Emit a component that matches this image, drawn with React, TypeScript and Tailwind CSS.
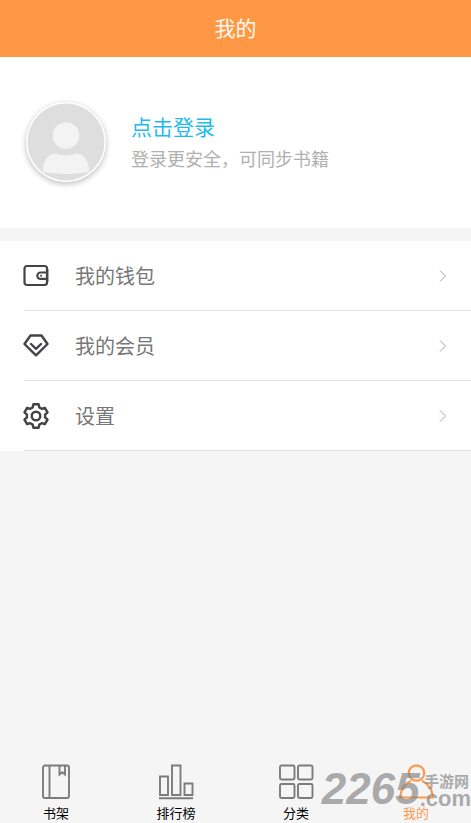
import type { ReactNode } from "react";

type Item = { label: string; icon: ReactNode };

function WalletIcon() {
  return (
    <svg viewBox="0 0 26 26" className="size-[26px]" fill="none" stroke="#444447" strokeWidth="2.2" aria-hidden="true">
      <rect x="1.500" y="3" width="22.500" height="19" rx="2.500" />
      <path d="M25 9.500h-7.500a3.200 3.200 0 0 0 0 6.400H25" />
      <path d="M24.200 6v13" strokeWidth="2.400" />
      <circle cx="18" cy="12.700" r="1" fill="#444447" stroke="none" />
    </svg>
  );
}

function DiamondIcon() {
  return (
    <svg viewBox="0 0 26 26" className="size-[26px]" fill="none" stroke="#444447" strokeWidth="2.400" strokeLinejoin="round" strokeLinecap="round" aria-hidden="true">
      <path d="M7.500 2.500h11L24.500 11 13 22.300 1.500 11z" />
      <path d="M8 11l5 4.800 5-4.800" />
    </svg>
  );
}

function GearIcon() {
  return (
    <svg viewBox="0 0 26 26" className="size-[26px]" fill="none" stroke="#444447" strokeWidth="2.400" strokeLinejoin="round" aria-hidden="true">
      <path d="M10.400 1.200h5.200l.7 3.200 2.400 1.400 3.200-1 2.600 4.500-2.400 2.300v2.800l2.400 2.300-2.600 4.500-3.200-1-2.400 1.400-.7 3.200h-5.200l-.7-3.200-2.400-1.400-3.200 1-2.600-4.500 2.400-2.300v-2.800L1.500 9.300l2.600-4.500 3.200 1 2.400-1.400z" />
      <circle cx="13" cy="13" r="4.300" />
    </svg>
  );
}

function BookIcon() {
  return (
    <svg viewBox="0 0 36 36" className="size-9" fill="none" stroke="#7c7c7c" strokeWidth="1.900" aria-hidden="true">
      <rect x="5" y="1.500" width="26" height="32.500" rx="2" />
      <path d="M11.500 1.500V34M21.500 1.500v9l2.800-2.200 2.700 2.200v-9" />
    </svg>
  );
}

function ChartIcon() {
  return (
    <svg viewBox="0 0 36 36" className="size-9" fill="none" stroke="#7c7c7c" strokeWidth="1.900" aria-hidden="true">
      <path d="M2 12.500h8v18.500H2zM14 1.500h8.500V31H14zM26.500 19.500h8V31h-8zM1 34.200h34" />
    </svg>
  );
}

function GridIcon() {
  return (
    <svg viewBox="0 0 36 36" className="size-9" fill="none" stroke="#7c7c7c" strokeWidth="1.900" aria-hidden="true">
      <rect x="2" y="1.500" width="14.500" height="14" rx="1.500" />
      <rect x="20" y="1.500" width="14.500" height="14" rx="1.500" />
      <rect x="2" y="20" width="14.500" height="14" rx="1.500" />
      <rect x="20" y="20" width="14.500" height="14" rx="1.500" />
    </svg>
  );
}

function PersonIcon() {
  return (
    <svg viewBox="0 0 36 36" className="size-9" fill="none" stroke="#fb9a4d" strokeWidth="2.200" strokeLinejoin="round" aria-hidden="true">
      <circle cx="18.500" cy="9" r="7.700" />
      <path d="M13 17C6.500 19.500 3 24.500 2 33.500H35C34 24.500 30.500 19.500 24 17" />
    </svg>
  );
}

function Avatar() {
  return (
    <svg viewBox="0 0 80 80" className="size-20 rounded-full shadow-[0_2px_5px_1px_rgba(0,0,0,0.2)]" role="img" aria-label="头像">
      <circle cx="40" cy="40" r="40" fill="#fff" />
      <circle cx="40" cy="40" r="38.500" fill="#dedede" />
      <circle cx="40" cy="33.500" r="13.300" fill="#f3f3f3" />
      <path d="M17 70v-3c1-9 5-15.500 13-15.500q10 4 20 0c8 0 12 6.500 13 15.500v3q-23 4-46 0z" fill="#f3f3f3" />
    </svg>
  );
}

const menu: Item[] = [
  { label: "我的钱包", icon: <WalletIcon /> },
  { label: "我的会员", icon: <DiamondIcon /> },
  { label: "设置", icon: <GearIcon /> },
];

const tabs: Item[] = [
  { label: "书架", icon: <BookIcon /> },
  { label: "排行榜", icon: <ChartIcon /> },
  { label: "分类", icon: <GridIcon /> },
  { label: "我的", icon: <PersonIcon /> },
];

export default function App() {
  return (
    <div lang="zh-CN" className="relative flex min-h-screen flex-col overflow-hidden bg-[#f5f5f5] font-['Noto_Sans_CJK_SC',sans-serif]">
      <header className="flex h-[57px] items-center justify-center bg-[#ff9844] pb-1">
        <h1 className="text-[21px] leading-8 text-[#fff8ee]">我的</h1>
      </header>

      <section className="flex h-[171px] items-center gap-[25px] bg-white px-[26px] pb-0.5">
        <Avatar />
        <div className="flex flex-col items-start">
          <button type="button" className="text-[21px] leading-8 text-[#1fbbed]">点击登录</button>
          <p className="text-lg leading-8 text-[#b0b0b0]">登录更安全，可同步书籍</p>
        </div>
      </section>

      <ul className="mt-[13px] bg-white pl-6">
        {menu.map(({ label, icon }) => (
          <li key={label} className="border-b border-[#e0e0e0]">
            <button type="button" className="flex h-[69px] w-full items-center pr-6 text-left">
              <span className="-ml-px">{icon}</span>
              <span className="ml-[26px] flex-1 text-xl leading-8 text-[#777]">{label}</span>
              <svg viewBox="0 0 8 12" className="h-3 w-2" fill="none" stroke="#a5a5a5" aria-hidden="true">
                <path d="M1 .5 6.500 6 1 11.500" />
              </svg>
            </button>
          </li>
        ))}
      </ul>

      <nav className="mt-auto flex justify-between pr-[27px] pl-7">
        {tabs.map(({ label, icon }) => (
          <button
            type="button"
            key={label}
            aria-current={label === "我的" ? "page" : undefined}
            className="flex w-14 flex-col items-center gap-[3px] text-[13px] leading-5 text-black aria-[current=page]:text-[#fb9a4d]"
          >
            {icon}
            {label}
          </button>
        ))}
      </nav>

      <div className="pointer-events-none absolute right-0 bottom-3.5 flex items-end text-[#888]/70">
        <span className="font-['Liberation_Sans',sans-serif] text-[44px] leading-10 font-bold italic">2265</span>
        <span className="flex flex-col items-end">
          <span className="pr-0.5 text-[15px] leading-4 font-bold">手游网</span>
          <span className="font-['Liberation_Sans',sans-serif] text-[22px] leading-5 font-bold">.com</span>
        </span>
      </div>
    </div>
  );
}
